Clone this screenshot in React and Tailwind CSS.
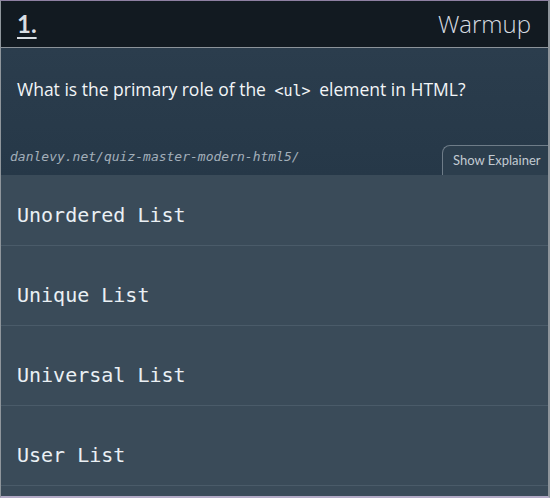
export default function App() {
  const answers = ["Unordered List", "Unique List", "Universal List", "User List"];

  return (
    <div className="w-[550px] h-[498px] flex flex-col bg-[#3a4b59] border-t border-t-[#8e80a2] border-b-2 border-b-[#b3aac6] border-l border-l-[#8f969c] border-r-2 border-r-[#8f969c] overflow-hidden">
      <div className="h-[47px] shrink-0 flex items-center justify-between px-4 bg-[#121a21] border-b border-[#8c939a]">
        <span className="text-[24px] font-bold underline underline-offset-4 decoration-2 text-[#d9dee3] font-['Lato',sans-serif]">1.</span>
        <span className="text-[24px] font-light text-[#d6dbe0] pr-[1px] font-['Open_Sans',sans-serif]">Warmup</span>
      </div>

      <div className="h-[127px] shrink-0 flex flex-col bg-gradient-to-b from-[#2b3d4d] to-[#263848]">
        <p className="pt-[28px] px-4 text-[17.5px] text-[#f2f5f7] font-['Open_Sans',sans-serif]">
          What is the primary role of the{" "}
          <code className="font-['DejaVu_Sans_Mono',monospace] text-[15px] px-1">&lt;ul&gt;</code>{" "}
          element in HTML?
        </p>
        <div className="mt-auto flex items-end justify-between h-[30px]">
          <span className="pl-[9px] pb-[9px] italic text-[13px] text-[#a3afba] font-['DejaVu_Sans_Mono',monospace]">
            danlevy.net/quiz-master-modern-html5/
          </span>
          <button className="h-[30px] w-[106px] rounded-tl-lg border-t border-l border-[#6e7c88] bg-[#2c3e4d] text-[13px] text-[#c2cad2] pl-[10px] text-left font-['Lato',sans-serif]">
            Show Explainer
          </button>
        </div>
      </div>

      {answers.map((a, i) => (
        <div
          key={a}
          className={`${i === 0 ? "h-[71px] pt-[28px]" : "h-[80px] pt-[37px]"} shrink-0 px-4 border-b border-[#4a5b69] text-[20px] leading-6 text-[#eaf0f4] font-['DejaVu_Sans_Mono',monospace]`}
        >
          {a}
        </div>
      ))}
    </div>
  );
}
